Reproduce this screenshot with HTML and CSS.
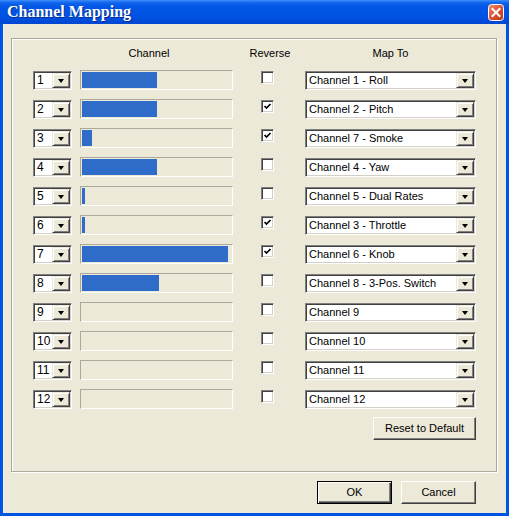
FILE: index.html
```html
<!DOCTYPE html>
<html>
<head>
<meta charset="utf-8">
<link rel="stylesheet" href="styles.css">
</head>
<body>
<div class="window">
  <div class="titlebar">
    <span class="title">Channel Mapping</span>
    <span class="close">
      <svg width="16" height="17" viewBox="0 0 16 17">
        <defs>
          <linearGradient id="cg" x1="0" y1="0" x2="1" y2="1">
            <stop offset="0" stop-color="#f0906c"/>
            <stop offset="0.5" stop-color="#dc5232"/>
            <stop offset="1" stop-color="#b8341a"/>
          </linearGradient>
        </defs>
        <rect x="0.5" y="0.5" width="15" height="16" rx="3" fill="url(#cg)" stroke="#ffffff"/>
        <path d="M4.5 5 L11.5 12 M11.5 5 L4.5 12" stroke="#ffffff" stroke-width="2" stroke-linecap="square"/>
      </svg>
    </span>
  </div>
  <div class="client">
    <div class="group">
      <div class="head">
        <span></span>
        <span class="h-channel">Channel</span>
        <span class="h-reverse">Reverse</span>
        <span class="h-map">Map To</span>
      </div>
      <div class="rows">
        <div class="row"><div class="combo small"><span class="val">1</span><span class="btn"><i class="arrow"></i></span></div><div class="track"><div class="fill" style="width:75px"></div></div><div class="cb"></div><div class="combo map"><span class="val">Channel 1 - Roll</span><span class="btn"><i class="arrow"></i></span></div></div>
        <div class="row"><div class="combo small"><span class="val">2</span><span class="btn"><i class="arrow"></i></span></div><div class="track"><div class="fill" style="width:75px"></div></div><div class="cb"><svg width="9" height="9" viewBox="0 0 9 9"><path d="M1.5 4 L3.5 6 L7.5 2" fill="none" stroke="#000" stroke-width="1.7"/></svg></div><div class="combo map"><span class="val">Channel 2 - Pitch</span><span class="btn"><i class="arrow"></i></span></div></div>
        <div class="row"><div class="combo small"><span class="val">3</span><span class="btn"><i class="arrow"></i></span></div><div class="track"><div class="fill" style="width:10px"></div></div><div class="cb"><svg width="9" height="9" viewBox="0 0 9 9"><path d="M1.5 4 L3.5 6 L7.5 2" fill="none" stroke="#000" stroke-width="1.7"/></svg></div><div class="combo map"><span class="val">Channel 7 - Smoke</span><span class="btn"><i class="arrow"></i></span></div></div>
        <div class="row"><div class="combo small"><span class="val">4</span><span class="btn"><i class="arrow"></i></span></div><div class="track"><div class="fill" style="width:75px"></div></div><div class="cb"></div><div class="combo map"><span class="val">Channel 4 - Yaw</span><span class="btn"><i class="arrow"></i></span></div></div>
        <div class="row"><div class="combo small"><span class="val">5</span><span class="btn"><i class="arrow"></i></span></div><div class="track"><div class="fill" style="width:3px"></div></div><div class="cb"></div><div class="combo map"><span class="val">Channel 5 - Dual Rates</span><span class="btn"><i class="arrow"></i></span></div></div>
        <div class="row"><div class="combo small"><span class="val">6</span><span class="btn"><i class="arrow"></i></span></div><div class="track"><div class="fill" style="width:3px"></div></div><div class="cb"><svg width="9" height="9" viewBox="0 0 9 9"><path d="M1.5 4 L3.5 6 L7.5 2" fill="none" stroke="#000" stroke-width="1.7"/></svg></div><div class="combo map"><span class="val">Channel 3 - Throttle</span><span class="btn"><i class="arrow"></i></span></div></div>
        <div class="row"><div class="combo small"><span class="val">7</span><span class="btn"><i class="arrow"></i></span></div><div class="track"><div class="fill" style="width:146px"></div></div><div class="cb"><svg width="9" height="9" viewBox="0 0 9 9"><path d="M1.5 4 L3.5 6 L7.5 2" fill="none" stroke="#000" stroke-width="1.7"/></svg></div><div class="combo map"><span class="val">Channel 6 - Knob</span><span class="btn"><i class="arrow"></i></span></div></div>
        <div class="row"><div class="combo small"><span class="val">8</span><span class="btn"><i class="arrow"></i></span></div><div class="track"><div class="fill" style="width:77px"></div></div><div class="cb"></div><div class="combo map"><span class="val">Channel 8 - 3-Pos. Switch</span><span class="btn"><i class="arrow"></i></span></div></div>
        <div class="row"><div class="combo small"><span class="val">9</span><span class="btn"><i class="arrow"></i></span></div><div class="track"></div><div class="cb"></div><div class="combo map"><span class="val">Channel 9</span><span class="btn"><i class="arrow"></i></span></div></div>
        <div class="row"><div class="combo small"><span class="val">10</span><span class="btn"><i class="arrow"></i></span></div><div class="track"></div><div class="cb"></div><div class="combo map"><span class="val">Channel 10</span><span class="btn"><i class="arrow"></i></span></div></div>
        <div class="row"><div class="combo small"><span class="val">11</span><span class="btn"><i class="arrow"></i></span></div><div class="track"></div><div class="cb"></div><div class="combo map"><span class="val">Channel 11</span><span class="btn"><i class="arrow"></i></span></div></div>
        <div class="row"><div class="combo small"><span class="val">12</span><span class="btn"><i class="arrow"></i></span></div><div class="track"></div><div class="cb"></div><div class="combo map"><span class="val">Channel 12</span><span class="btn"><i class="arrow"></i></span></div></div>
      </div>
      <div class="reset-row"><div class="button reset">Reset to Default</div></div>
    </div>
    <div class="buttons">
      <div class="button default">OK</div>
      <div class="button">Cancel</div>
    </div>
  </div>
</div>
</body>
</html>
```

FILE: styles.css
```css
html, body {
  margin: 0;
  padding: 0;
  background: #ece9d8;
}

.window {
  width: 509px;
  height: 516px;
  box-sizing: border-box;
  background: #0054e3;
  display: flex;
  flex-direction: column;
  font-family: "Liberation Sans", Arial, sans-serif;
  font-size: 11px;
  color: #000;
}

.titlebar {
  height: 24px;
  flex: none;
  background: linear-gradient(180deg, #3d8ff7 0px, #1b6ef0 2px, #0a5ee8 4px, #0055e5 8px, #0053e2 16px, #004bd8 21px, #0046d0 24px);
  display: flex;
  align-items: center;
  justify-content: space-between;
  padding: 0 5px 0 7px;
}

.title {
  font-family: "Liberation Serif", "Times New Roman", serif;
  font-weight: bold;
  font-size: 16px;
  line-height: 24px;
  color: #fff;
  text-shadow: 1px 1px 0 #0c2a8e;
}

.close {
  display: block;
  width: 16px;
  height: 17px;
  margin-top: 1px;
}

.close svg {
  display: block;
}

.client {
  flex: 1;
  margin: 0 3px 3px 3px;
  background: #ece9d8;
  display: flex;
  flex-direction: column;
  box-shadow: inset 1px 0 0 #f4f2e8;
}

.group {
  margin: 14px 9px 0 8px;
  height: 434px;
  box-sizing: border-box;
  border: 1px solid #aca899;
  box-shadow: inset 1px 1px 0 #fff, 1px 1px 0 #fff;
  padding: 8px 20px 0 21px;
}

.head,
.row {
  display: grid;
  grid-template-columns: 47px 153px 72px 171px;
}

.head {
  height: 13px;
  line-height: 13px;
  margin-bottom: 10px;
}

.h-channel {
  text-align: center;
  padding-right: 15px;
}

.h-reverse {
  text-align: center;
  padding-left: 2px;
}

.h-map {
  text-align: center;
}

.rows {
  display: flex;
  flex-direction: column;
  gap: 9px;
}

.row {
  height: 20px;
  align-items: start;
}

.combo {
  height: 19px;
  margin-top: 1px;
  box-sizing: border-box;
  border: 1px solid;
  border-color: #808080 #ffffff #ffffff #808080;
  box-shadow: inset 1px 1px 0 #404040, inset -1px -1px 0 #d4d0c8;
  background: #fff;
  display: flex;
  align-items: stretch;
  padding: 1px;
}

.combo.small {
  width: 39px;
}

.combo.map {
  width: 171px;
}

.combo .val {
  flex: 1;
  padding-left: 2px;
  line-height: 15px;
  white-space: nowrap;
  overflow: hidden;
}

.combo.small .val {
  font-size: 12px;
}

.btn {
  width: 18px;
  box-sizing: border-box;
  background: #ece9d8;
  border: 1px solid;
  border-color: #ece9d8 #404040 #404040 #ece9d8;
  box-shadow: inset 1px 1px 0 #fff, inset -1px -1px 0 #808080;
  display: flex;
  align-items: center;
  justify-content: center;
}

.arrow {
  display: block;
  width: 0;
  height: 0;
  border-left: 3.5px solid transparent;
  border-right: 3.5px solid transparent;
  border-top: 4px solid #000;
  margin-top: 1px;
}

.track {
  width: 153px;
  height: 20px;
  box-sizing: border-box;
  border: 1px solid;
  border-color: #aca899 #ffffff #ffffff #aca899;
  padding: 1px;
}

.fill {
  height: 16px;
  background: #2f6cc9;
}

.cb {
  width: 13px;
  height: 13px;
  margin-left: 28px;
  margin-top: 1px;
  box-sizing: border-box;
  border: 1px solid;
  border-color: #808080 #ffffff #ffffff #808080;
  box-shadow: inset 1px 1px 0 #404040, inset -1px -1px 0 #d4d0c8;
  background: #fff;
  padding: 1px;
}

.cb svg {
  display: block;
}

.reset-row {
  display: flex;
  justify-content: flex-end;
  margin-top: 8px;
}

.button {
  width: 75px;
  height: 23px;
  box-sizing: border-box;
  background: #ece9d8;
  border: 1px solid;
  border-color: #ffffff #404040 #404040 #ffffff;
  box-shadow: inset -1px -1px 0 #808080;
  text-align: center;
  line-height: 20px;
}

.button.reset {
  width: 103px;
}

.button.default {
  border: 1px solid #000;
  box-shadow: inset 1px 1px 0 #fff, inset -1px -1px 0 #404040, inset -2px -2px 0 #808080;
}

.buttons {
  display: flex;
  justify-content: flex-end;
  gap: 9px;
  margin-top: 9px;
  padding-right: 30px;
}
```
